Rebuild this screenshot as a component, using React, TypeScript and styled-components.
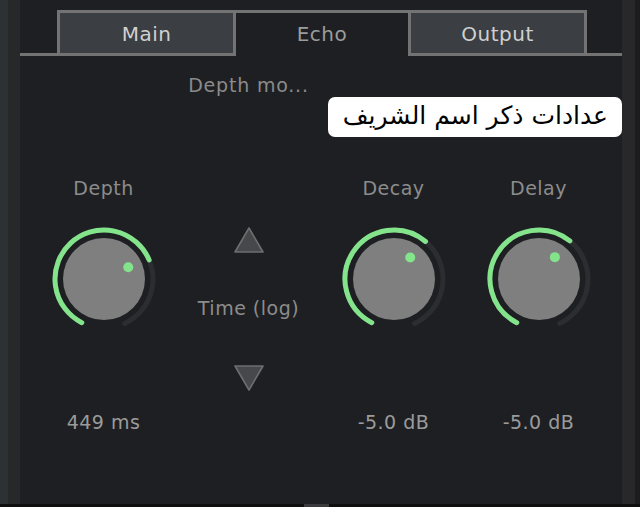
import React from "react"
import styled, { createGlobalStyle } from "styled-components"

const GlobalStyle = createGlobalStyle`
    html, body {
        margin: 0;
        padding: 0;
        background: #1e1f22;
    }
`

const Root = styled.div`
    position: relative;
    width: 640px;
    height: 507px;
    overflow: hidden;

    display: flex;
    flex-direction: column;

    font-family: 'DejaVu Sans', 'Open Sans', sans-serif;
`

const Body = styled.div`
    flex: 1;
    display: flex;
    flex-direction: row;
`

const Strip = styled.div<{ $w: number; $bg: string }>`
    width: ${p => p.$w}px;
    background: ${p => p.$bg};
    flex-shrink: 0;
`

const Panel = styled.div`
    flex: 1;
    background: #1e1f22;
    padding-top: 10px;
    display: flex;
    flex-direction: column;
`

const TabBar = styled.div`
    display: flex;
    flex-direction: row;
    align-items: flex-end;
    height: 46px;
`

const TabGap = styled.div<{ $w?: number }>`
    width: ${p => (p.$w ? `${p.$w}px` : "auto")};
    flex: ${p => (p.$w ? "none" : 1)};
    border-bottom: 3px solid #737373;
`

const Tab = styled.div<{ $active?: boolean }>`
    box-sizing: border-box;
    width: ${p => (p.$active ? 172 : 179)}px;
    height: 46px;

    display: flex;
    align-items: center;
    justify-content: center;

    background: ${p => (p.$active ? "#1e1f22" : "#3b3e43")};
    border: 3px solid #737373;
    ${p => p.$active && `
        border-left: none;
        border-right: none;
        border-bottom-color: transparent;
    `}

    color: ${p => (p.$active ? "#9c9c9c" : "#d0d0d0")};
    font-size: 20px;
    letter-spacing: 0.5px;
    padding-top: 1px;
`

const Grid = styled.div`
    display: grid;
    grid-template-columns: repeat(4, 145px);
    padding-left: 11px;
`

const Title = styled.div`
    grid-column: 2;
    margin-top: 17px;
    height: 24px;
    line-height: 24px;
    text-align: center;
    color: #8b8b8b;
    font-size: 19px;
    letter-spacing: 0.8px;
    white-space: nowrap;
`

const Controls = styled(Grid)`
    margin-top: 79px;
`

const KnobColumn = styled.div`
    display: flex;
    flex-direction: column;
    align-items: center;
`

const Label = styled.div`
    height: 24px;
    line-height: 24px;
    color: #8c8c8c;
    font-size: 19px;
    letter-spacing: 0.5px;
    white-space: nowrap;
`

const KnobSvg = styled.svg`
    display: block;
    margin-top: 24px;
`

const Value = styled(Label)`
    margin-top: 76px;
    color: #9b9b9b;
`

const Stepper = styled.div`
    display: flex;
    flex-direction: column;
    align-items: center;
    padding-top: 50px;
`

const StepLabel = styled(Label)`
    margin: 42px 0 44px;
`

const Tooltip = styled.div`
    position: absolute;
    left: 328px;
    top: 97px;
    width: 294px;
    height: 40px;
    box-sizing: border-box;

    display: flex;
    align-items: center;
    justify-content: flex-start;
    padding: 0 14px 4px 0;

    background: #ffffff;
    border-radius: 7px;

    color: #000;
    font-family: 'DejaVu Sans', 'Noto Sans', sans-serif;
    font-size: 25px;
    direction: rtl;
`

const BottomBar = styled.div`
    height: 3px;
    background: #0f0f10;
    display: flex;
    justify-content: center;
`

const Nub = styled.div`
    width: 25px;
    height: 3px;
    margin-left: -8px;
    background: #3a3a3c;
`

const polar = (cx: number, cy: number, r: number, deg: number) => {
    const a = (deg * Math.PI) / 180
    return [cx + r * Math.sin(a), cy - r * Math.cos(a)]
}

const arc = (r: number, from: number, to: number) => {
    const [x1, y1] = polar(55, 55, r, from)
    const [x2, y2] = polar(55, 55, r, to)
    const large = to - from > 180 ? 1 : 0
    return `M ${x1} ${y1} A ${r} ${r} 0 ${large} 1 ${x2} ${y2}`
}

const START = -153
const END = 155

const Knob = ({ label, value, angle }: { label: string; value: string; angle: number }) => {
    const [dx, dy] = polar(55, 55, 27, angle - 3)
    return (
        <KnobColumn>
            <Label>{label}</Label>
            <KnobSvg width={110} height={110} viewBox="0 0 110 110">
                <path d={arc(49, START, END)} fill="none" stroke="#2c2d30" strokeWidth={5} strokeLinecap="round" />
                <path d={arc(49, START, angle)} fill="none" stroke="#84e48c" strokeWidth={5} strokeLinecap="round" />
                <circle cx={55} cy={55} r={41} fill="#7f7f7f" />
                <circle cx={dx} cy={dy} r={5} fill="#84e48c" />
            </KnobSvg>
            <Value>{value}</Value>
        </KnobColumn>
    )
}

const Arrow = ({ down }: { down?: boolean }) => (
    <svg width={32} height={28} viewBox="0 0 32 28">
        <polygon
            points={down ? "2,2 30,2 16,26" : "16,2 30,26 2,26"}
            fill="#46484c"
            stroke="#6e6e6e"
            strokeWidth={1.6}
            strokeLinejoin="round"
        />
    </svg>
)

export default function App() {
    return (
        <Root>
            <GlobalStyle />
            <Body>
                <Strip $w={8} $bg="#2c3133" />
                <Strip $w={12} $bg="#27282a" />
                <Panel>
                    <TabBar>
                        <TabGap $w={37} />
                        <Tab>Main</Tab>
                        <Tab $active>Echo</Tab>
                        <Tab>Output</Tab>
                        <TabGap />
                    </TabBar>
                    <Grid>
                        <Title>Depth mo...</Title>
                    </Grid>
                    <Controls>
                        <Knob label="Depth" value="449 ms" angle={67} />
                        <Stepper>
                            <Arrow />
                            <StepLabel>Time (log)</StepLabel>
                            <Arrow down />
                        </Stepper>
                        <Knob label="Decay" value="-5.0 dB" angle={40} />
                        <Knob label="Delay" value="-5.0 dB" angle={39} />
                    </Controls>
                </Panel>
                <Strip $w={13} $bg="#28282a" />
                <Strip $w={5} $bg="#1c1c1e" />
            </Body>
            <BottomBar>
                <Nub />
            </BottomBar>
            <Tooltip>عدادات ذكر اسم الشريف</Tooltip>
        </Root>
    )
}
